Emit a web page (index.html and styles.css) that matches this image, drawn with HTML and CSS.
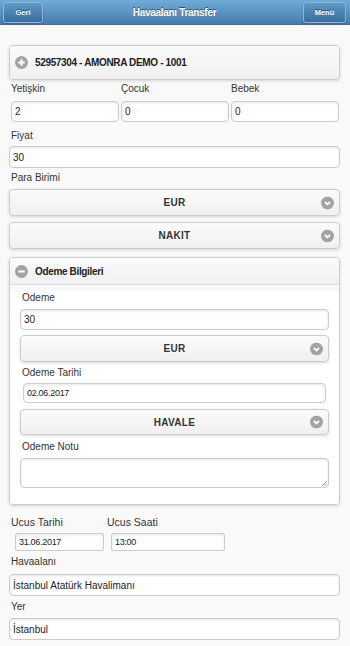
FILE: index.html
```html
<!DOCTYPE html>
<html lang="tr">
<head>
	<meta charset="UTF-8">
	<meta name="viewport" content="width=device-width, initial-scale=1.0">
	<title>Havaalanı Transfer</title>
	<link rel="stylesheet" href="styles.css">
</head>
<body>
	<div class="header">
		<a class="hbtn hbtn_l">Geri</a>
		<h1 class="title">Havaalanı Transfer</h1>
		<a class="hbtn hbtn_r">Menü</a>
	</div>
	<div class="content">
		<!-- rezervasyon -->
		<div class="coll coll_closed">
			<div class="coll_head">
				<svg class="ico" viewBox="0 0 14 14"><circle cx="7" cy="7" r="7" fill="#a3a3a3"/><path d="M7 3.5v7M3.5 7h7" stroke="#fff" stroke-width="2.2"/></svg>
				<span>52957304 - AMONRA DEMO - 1001</span>
			</div>
		</div>

		<div class="three">
			<div class="col">
				<label class="lbl">Yetişkin</label>
				<div class="inp inp_s">2</div>
			</div>
			<div class="col">
				<label class="lbl">Çocuk</label>
				<div class="inp inp_s">0</div>
			</div>
			<div class="col">
				<label class="lbl">Bebek</label>
				<div class="inp inp_s">0</div>
			</div>
		</div>

		<label class="lbl lbl_fiyat">Fiyat</label>
		<div class="inp">30</div>

		<label class="lbl lbl_para">Para Birimi</label>
		<div class="sel">EUR
			<svg class="arrow" viewBox="0 0 14 14"><circle cx="7" cy="7" r="7" fill="#a3a3a3"/><path d="M4.2 5.8l2.8 2.8 2.8-2.8" fill="none" stroke="#fff" stroke-width="2"/></svg>
		</div>
		<div class="sel sel_2">NAKIT
			<svg class="arrow" viewBox="0 0 14 14"><circle cx="7" cy="7" r="7" fill="#a3a3a3"/><path d="M4.2 5.8l2.8 2.8 2.8-2.8" fill="none" stroke="#fff" stroke-width="2"/></svg>
		</div>

		<!-- odeme -->
		<div class="coll coll_open">
			<div class="coll_head">
				<svg class="ico" viewBox="0 0 14 14"><circle cx="7" cy="7" r="7" fill="#a3a3a3"/><path d="M3.5 7h7" stroke="#fff" stroke-width="2.2"/></svg>
				<span>Odeme Bilgileri</span>
			</div>
			<div class="coll_body">
				<label class="lbl lbl_odeme">Odeme</label>
				<div class="inp">30</div>
				<div class="sel sel_in">EUR
					<svg class="arrow" viewBox="0 0 14 14"><circle cx="7" cy="7" r="7" fill="#a3a3a3"/><path d="M4.2 5.8l2.8 2.8 2.8-2.8" fill="none" stroke="#fff" stroke-width="2"/></svg>
				</div>
				<label class="lbl lbl_tarih">Odeme Tarihi</label>
				<div class="inp inp_date">02.06.2017</div>
				<div class="sel sel_hav">HAVALE
					<svg class="arrow" viewBox="0 0 14 14"><circle cx="7" cy="7" r="7" fill="#a3a3a3"/><path d="M4.2 5.8l2.8 2.8 2.8-2.8" fill="none" stroke="#fff" stroke-width="2"/></svg>
				</div>
				<label class="lbl lbl_not">Odeme Notu</label>
				<div class="txt">
					<svg class="grip" viewBox="0 0 6 6"><path d="M1 6L6 1M3.5 6L6 3.5" stroke="#888" stroke-width="0.8"/></svg>
				</div>
			</div>
		</div>

		<div class="two">
			<div class="col_a">
				<label class="lbl">Ucus Tarihi</label>
				<div class="inp inp_flight inp_fd">31.06.2017</div>
			</div>
			<div class="col_b">
				<label class="lbl">Ucus Saati</label>
				<div class="inp inp_flight inp_ft">13:00</div>
			</div>
		</div>

		<label class="lbl lbl_hava">Havaalanı</label>
		<div class="inp">İstanbul Atatürk Havalimanı</div>

		<label class="lbl lbl_yer">Yer</label>
		<div class="inp inp_yer">İstanbul</div>
	</div>
</body>
</html>
```

FILE: styles.css
```css
* {
	margin: 0;
	padding: 0;
	box-sizing: border-box;
}
body {
	background: #f9f9f9;
	font-family: "Liberation Sans", Arial, sans-serif;
	color: #333;
	font-size: 10px;
	width: 350px;
	overflow: hidden;
}
/* 顶部 */
.header {
	height: 25px;
	display: grid;
	grid-template-columns: 1fr auto 1fr;
	align-items: center;
	padding: 0 4px 0 3px;
	background: linear-gradient(#6facd5, #497bae);
	border-bottom: 1px solid #456f9a;
}
.title {
	font-size: 10px;
	letter-spacing: -0.3px;
	font-weight: bold;
	color: #fff;
	text-shadow: 0 -1px 0 #254f7a;
}
.hbtn {
	display: flex;
	align-items: center;
	justify-content: center;
	height: 21px;
	font-size: 7.5px;
	font-weight: bold;
	color: #fff;
	text-shadow: 0 -1px 0 #194b7e;
	border: 1px solid #8fb5d7;
	border-radius: 3px;
	background: linear-gradient(#5f9cc5, #396b9e);
	box-shadow: 0 1px 2px rgba(0,0,0,.2);
}
.hbtn_l {
	width: 40px;
	justify-self: start;
}
.hbtn_r {
	width: 43px;
	justify-self: end;
}
.content {
	padding: 20px 10px 0 9px;
}
/* 折叠块 */
.coll {
	border: 1px solid #ccc;
	border-radius: 4px;
	box-shadow: 0 1px 3px rgba(0,0,0,.15);
	overflow: hidden;
}
.coll_head {
	display: flex;
	align-items: center;
	gap: 7px;
	padding: 0 0 0 5px;
	background: linear-gradient(#fbfbfb, #f0f0f0);
	font-size: 10px;
	letter-spacing: -0.35px;
	font-weight: bold;
	color: #222;
}
.coll_closed .coll_head {
	height: 33px;
}
.coll_open {
	margin-top: 8px;
}
.coll_open .coll_head {
	height: 27px;
	border-bottom: 1px solid #ddd;
}
.ico {
	width: 13px;
	height: 13px;
}
.coll_body {
	background: #fff;
	padding: 0 10px 16px 10px;
}
/* 标签 */
.lbl {
	display: block;
	line-height: 14px;
	font-size: 10px;
	color: #333;
	padding-left: 2px;
}
.three {
	display: grid;
	grid-template-columns: 1fr 1fr 1fr;
	gap: 2px;
	margin-top: 2px;
	padding: 0 1px 0 2px;
}
.three .lbl {
	margin-bottom: 5px;
	padding-left: 0;
}
.lbl_fiyat { margin-top: 7px; margin-bottom: 3px; }
.lbl_para { margin-top: 3px; margin-bottom: 4px; }
.lbl_odeme { margin-top: 6px; margin-bottom: 4px; }
.lbl_tarih { margin-top: 4px; margin-bottom: 3px; }
.lbl_not { margin-top: 5px; margin-bottom: 4px; }
.lbl_hava { margin-top: 4px; margin-bottom: 5px; }
.lbl_yer { margin-top: 4px; margin-bottom: 4px; }
/* 输入框 */
.inp {
	height: 22px;
	display: flex;
	align-items: center;
	padding-left: 3px;
	background: #fff;
	border: 1px solid #ccc;
	border-radius: 4px;
	box-shadow: inset 0 1px 3px rgba(0,0,0,.1);
	font-size: 10px;
	color: #222;
}
.inp_s {
	height: 21px;
}
.coll_body .inp {
	height: 21px;
}
.coll_body .inp_date {
	height: 20px;
	margin: 0 3px;
	font-size: 9px;
	letter-spacing: -0.3px;
}
.inp_yer {
	height: 22px;
}
/* 下拉 */
.sel {
	position: relative;
	height: 27px;
	display: flex;
	align-items: center;
	justify-content: center;
	border: 1px solid #ccc;
	border-radius: 4px;
	background: linear-gradient(#fbfbfb, #f0f0f0);
	box-shadow: 0 1px 3px rgba(0,0,0,.15);
	font-size: 10px;
	font-weight: bold;
	color: #333;
	text-shadow: 0 1px 0 #fff;
	letter-spacing: 0.3px;
}
.sel_2 {
	margin-top: 6px;
}
.sel_in {
	margin-top: 5px;
}
.sel_hav {
	margin-top: 6px;
	height: 26px;
}
.arrow {
	position: absolute;
	right: 5px;
	top: 50%;
	transform: translate(0,-50%);
	width: 13px;
	height: 13px;
}
.txt {
	position: relative;
	height: 30px;
	background: #fff;
	border: 1px solid #ccc;
	border-radius: 4px;
	box-shadow: inset 0 1px 3px rgba(0,0,0,.1);
}
.grip {
	position: absolute;
	right: 1px;
	bottom: 1px;
	width: 6px;
	height: 6px;
}
/* 航班 */
.two {
	display: flex;
	margin-top: 10px;
	padding-left: 2px;
}
.two .lbl {
	padding-left: 0;
	margin-bottom: 4px;
	font-size: 10.5px;
}
.col_a {
	width: 96px;
}
.inp_flight {
	height: 18px;
	border-radius: 2px;
	font-size: 9px;
	letter-spacing: -0.3px;
}
.inp_fd {
	width: 89px;
	margin-left: 4px;
}
.inp_ft {
	width: 114px;
	margin-left: 4px;
}
```
